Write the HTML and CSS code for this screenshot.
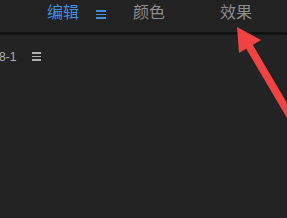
FILE: index.html
```html
<!DOCTYPE html>
<html>
<head>
<meta charset="utf-8">
<link rel="stylesheet" href="styles.css">
</head>
<body>
<div class="app">
  <div class="tabs">
    <span class="tab active">编辑</span>
    <span class="menu blue"><i></i><i></i><i></i></span>
    <span class="tab t2">颜色</span>
    <span class="tab t3">效果</span>
  </div>
  <div class="sep"></div>
  <div class="row">
    <span class="seq">8-1</span>
    <span class="menu gray"><i></i><i></i><i></i></span>
  </div>
</div>
<svg class="arrow" width="287" height="218" viewBox="0 0 287 218">
  <line x1="249" y1="46" x2="292" y2="119" stroke="#f04343" stroke-width="7.5" stroke-linecap="round"/>
  <polygon points="237,27 261,40 239,53" fill="#f04343"/>
</svg>
</body>
</html>
```
FILE: styles.css
```css
html, body {
  margin: 0;
  padding: 0;
  background: #232323;
  width: 287px;
  height: 218px;
  overflow: hidden;
}
.app {
  font-family: "Noto Sans CJK SC", "Liberation Sans", sans-serif;
}
.tabs {
  height: 32px;
  display: flex;
  align-items: flex-start;
  background: #222222;
  padding-left: 47px;
  box-sizing: border-box;
}
.tab {
  font-size: 16px;
  line-height: 22px;
  color: #8c8c8c;
}
.tab.active {
  color: #3f8edb;
}
.t2 { margin-left: 27px; }
.t3 { margin-left: 55px; }
.menu {
  display: flex;
  flex-direction: column;
  gap: 2px;
  width: 10px;
}
.menu i {
  display: block;
  height: 1.5px;
  background: currentColor;
}
.menu.blue {
  color: #3f8edb;
  margin-left: 17px;
  margin-top: 10px;
}
.sep {
  height: 3px;
  background: linear-gradient(#151515, #0e0e0e, #1a1a1a);
}
.row {
  display: flex;
  align-items: center;
  padding-top: 13px;
  height: 17px;
}
.seq {
  font-family: "Liberation Sans", sans-serif;
  font-size: 12px;
  color: #b0b0b0;
  margin-left: -1px;
}
.menu.gray {
  color: #b0b0b0;
  margin-left: 16px;
  width: 9px;
}
.arrow {
  position: absolute;
  left: 0;
  top: 0;
}
```
